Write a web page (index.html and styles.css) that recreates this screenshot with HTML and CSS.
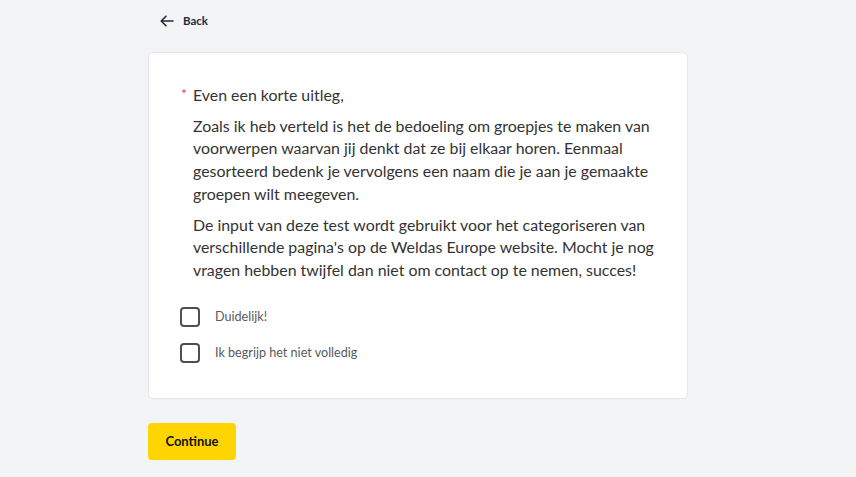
FILE: index.html
```html
<!DOCTYPE html>
<html lang="nl">
<head>
<meta charset="utf-8">
<link rel="stylesheet" href="styles.css">
</head>
<body>
<div class="page">
  <a class="back" href="#">
    <svg width="14" height="12" viewBox="0 0 14 12" fill="none" stroke="#1f2937" stroke-width="1.6" stroke-linecap="round" stroke-linejoin="round"><path d="M13 6H1.5M6 1.2L1.2 6L6 10.8"/></svg>
    <span>Back</span>
  </a>
  <div class="card">
    <div class="question">
      <span class="req">*</span>
      <div class="qtext">
        <p class="title">Even een korte uitleg,</p>
        <p>Zoals ik heb verteld is het de bedoeling om groepjes te maken van voorwerpen waarvan jij denkt dat ze bij elkaar horen. Eenmaal gesorteerd bedenk je vervolgens een naam die je aan je gemaakte groepen wilt meegeven.</p>
        <p>De input van deze test wordt gebruikt voor het categoriseren van verschillende pagina's op de Weldas Europe website. Mocht je nog vragen hebben twijfel dan niet om contact op te nemen, succes!</p>
      </div>
    </div>
    <div class="options">
      <label class="opt"><span class="box"></span><span>Duidelijk!</span></label>
      <label class="opt"><span class="box"></span><span>Ik begrijp het niet volledig</span></label>
    </div>
  </div>
  <button class="continue">Continue</button>
</div>
</body>
</html>
```
FILE: styles.css
```css
* { box-sizing: border-box; }
html, body { margin: 0; padding: 0; }
body {
  background: #f3f4f6;
  font-family: "Lato", "Open Sans", sans-serif;
  color: #333;
}
.page {
  width: 540px;
  margin-left: 148px;
  padding-top: 12px;
}
.back {
  display: flex;
  align-items: center;
  gap: 9px;
  margin-left: 12px;
  height: 17px;
  text-decoration: none;
  color: #1f2a44;
  font-size: 11.5px;
  font-weight: 700;
}
.card {
  margin-top: 23px;
  background: #fff;
  border: 1px solid #e6e7ea;
  border-radius: 5px;
  padding: 31px 10px 35px 31px;
}
.question {
  display: flex;
  gap: 6px;
}
.req {
  color: #e0475f;
  font-size: 14px;
  line-height: 20px;
  width: 6px;
  margin-left: 1px;
  flex: none;
}
.qtext { width: 470px; flex: none; }
.qtext p {
  margin: 0 0 8px 0;
  font-size: 15.9px;
  line-height: 22.7px;
  color: #333;
}
.qtext p.title { margin-bottom: 8px; }
.options {
  margin-top: 17px;
  display: flex;
  flex-direction: column;
  gap: 16px;
}
.opt {
  display: flex;
  align-items: center;
  gap: 15px;
  font-size: 12.6px;
  color: #555a60;
  height: 20px;
}
.box {
  width: 20px;
  height: 20px;
  border: 2px solid #4b5058;
  border-radius: 4px;
  flex: none;
}
.continue {
  margin-top: 24px;
  width: 88px;
  height: 37px;
  background: #ffd500;
  border: none;
  border-radius: 4px;
  font-family: inherit;
  font-size: 13px;
  font-weight: 700;
  color: #111;
}
```
